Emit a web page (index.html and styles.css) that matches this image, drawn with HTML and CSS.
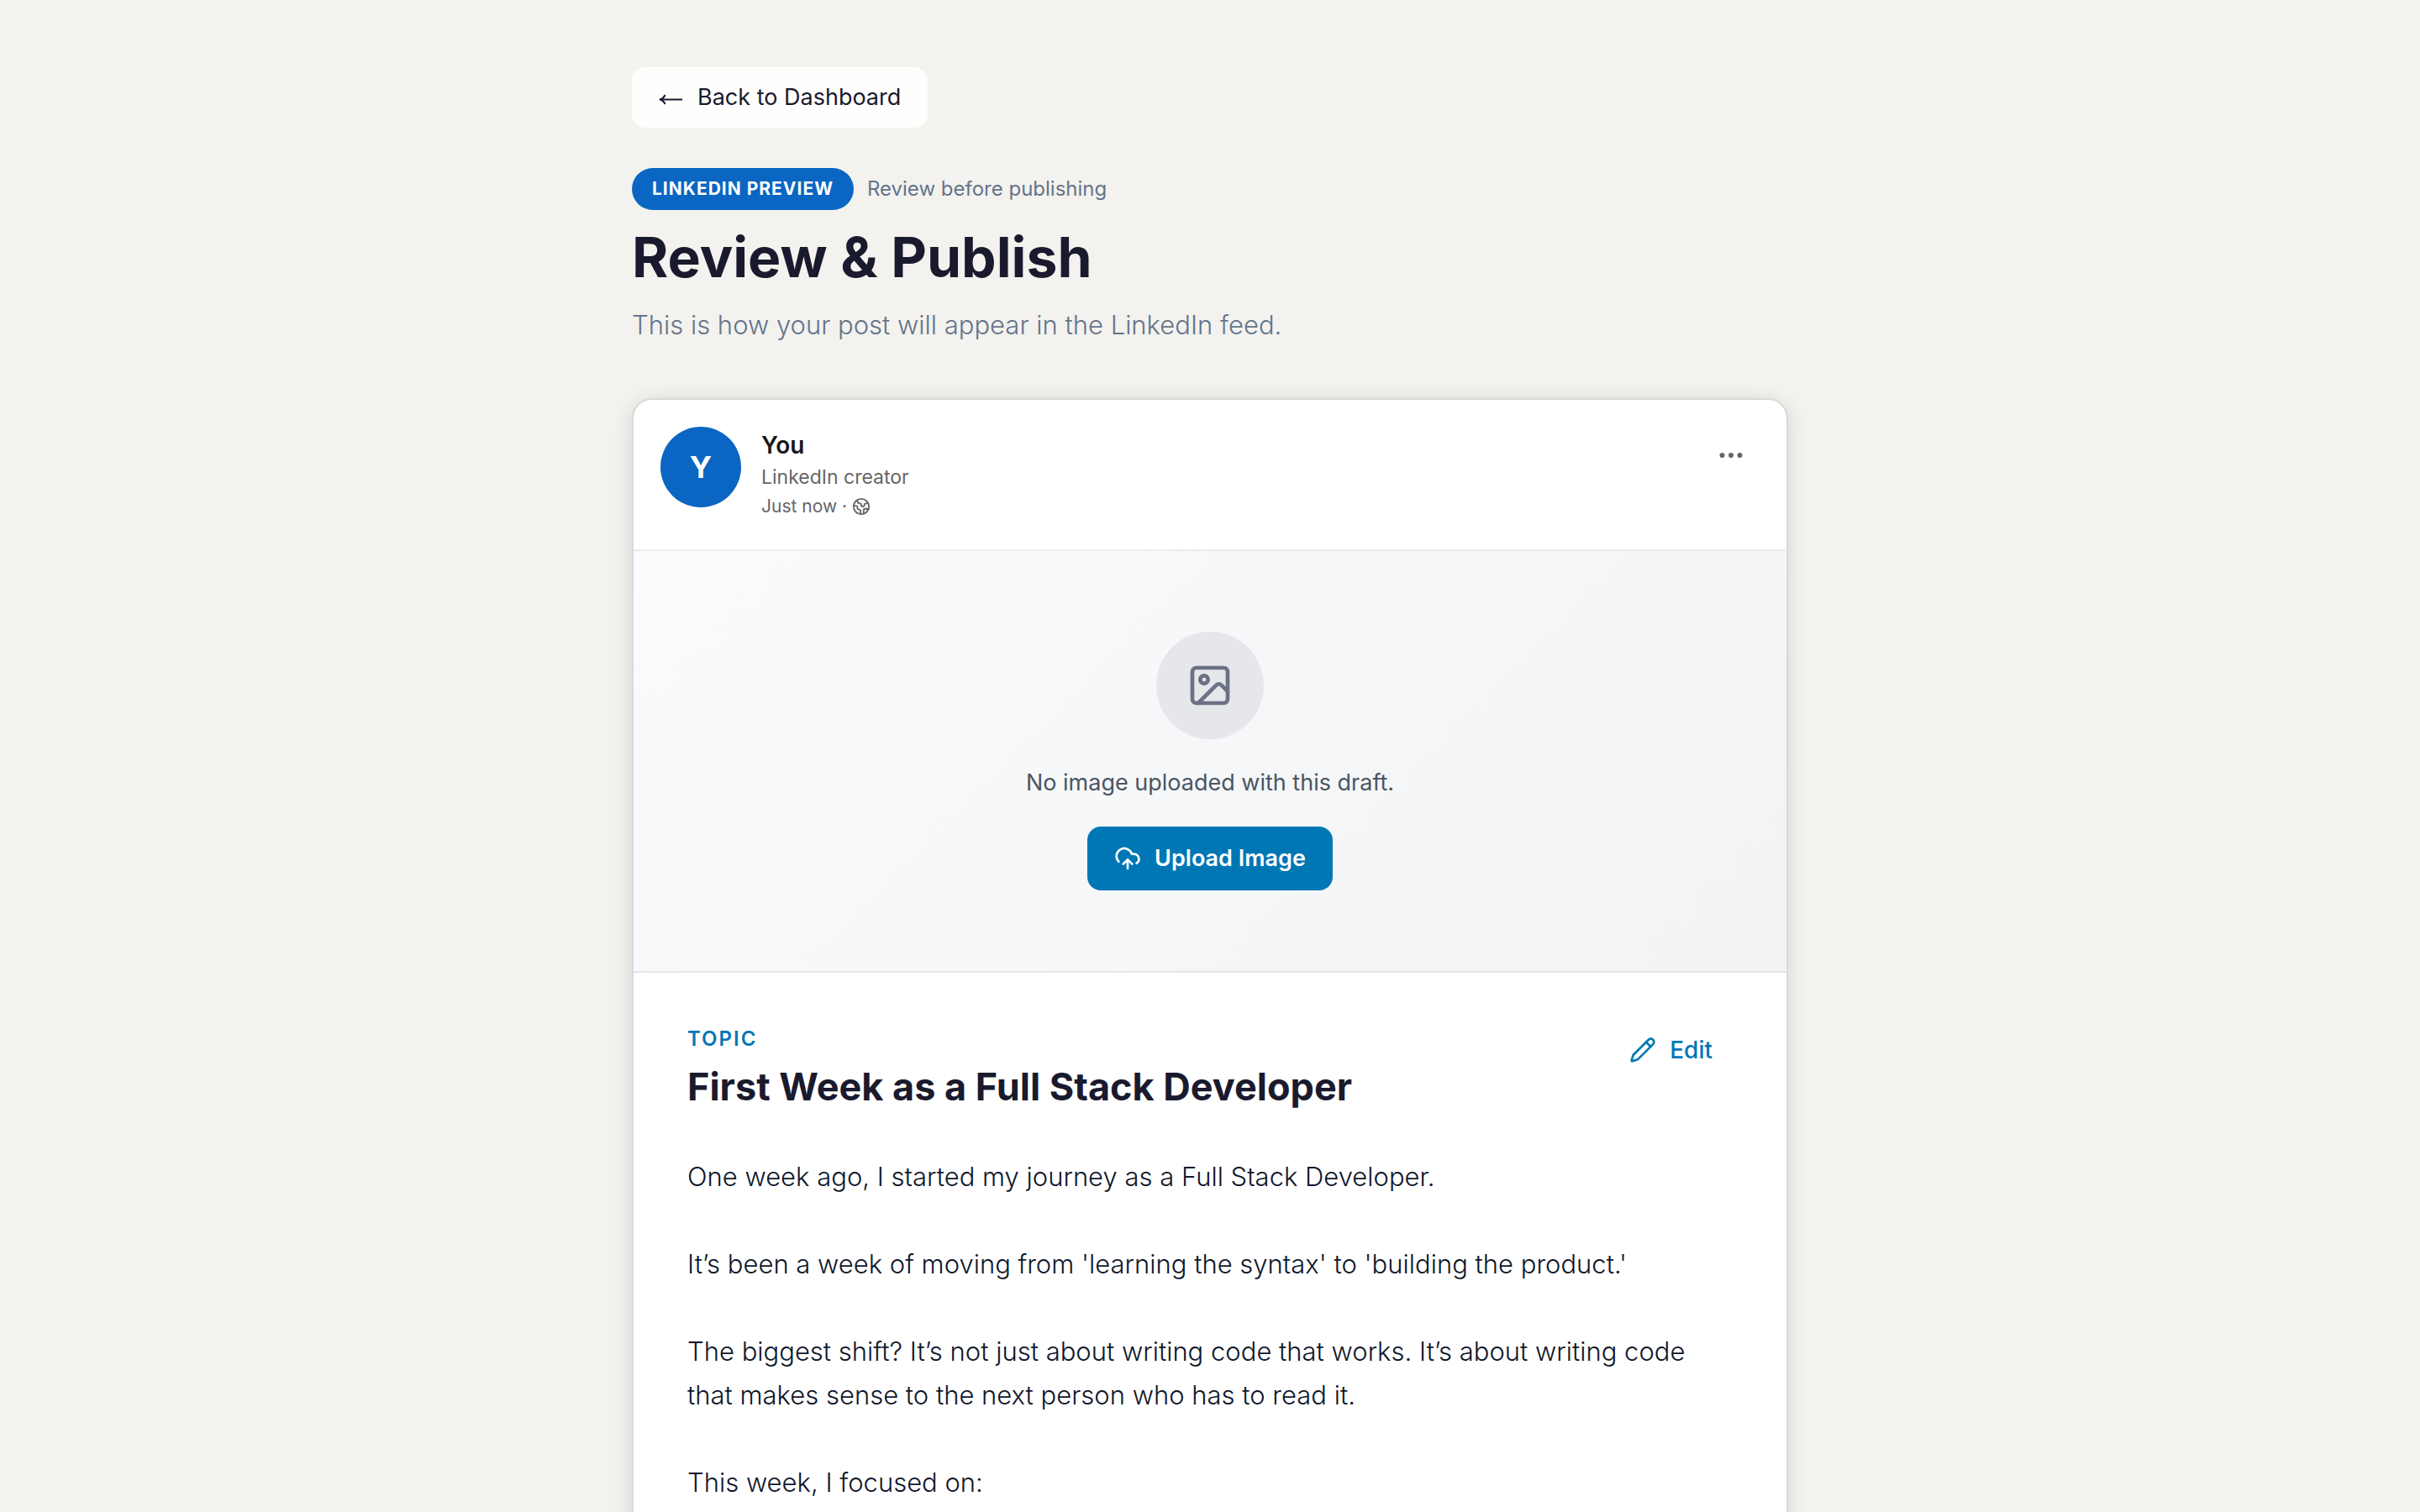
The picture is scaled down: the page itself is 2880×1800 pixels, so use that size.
FILE: index.html
```html
<!DOCTYPE html>
<html lang="en">
<head>
  <meta charset="utf-8">
  <meta name="viewport" content="width=device-width, initial-scale=1">
  <title>Review &amp; Publish</title>
  <link rel="stylesheet" href="styles.css">
</head>
<body>
  <main class="page">
    <button class="back" type="button">
      <svg class="icon icon-back" viewBox="0 0 28 28" aria-hidden="true"><path d="M2 16.500H28"/><path d="M7.500 11C6.300 13.800 4.300 15.800 1.500 16.500C4.300 17.200 6.300 19.200 7.500 22"/></svg>
      Back to Dashboard
    </button>

    <header class="intro">
      <div class="intro-meta">
        <span class="pill">LINKEDIN PREVIEW</span>
        <span class="meta-note">Review before publishing</span>
      </div>
      <h1 class="title">Review &amp; Publish</h1>
      <p class="subtitle">This is how your post will appear in the LinkedIn feed.</p>
    </header>

    <article class="card">
      <div class="author">
        <div class="avatar" aria-hidden="true">Y</div>
        <div class="author-text">
          <div class="author-name">You</div>
          <div class="author-role">LinkedIn creator</div>
          <div class="author-time">
            <span>Just now ·</span>
            <svg class="icon icon-globe" viewBox="0 0 24 24" aria-hidden="true"><path d="M21.54 15H17a2 2 0 0 0-2 2v4.54"/><path d="M7 3.34V5a3 3 0 0 0 3 3a2 2 0 0 1 2 2c0 1.1.9 2 2 2a2 2 0 0 0 2-2c0-1.1.9-2 2-2h3.17"/><path d="M11 21.95V18a2 2 0 0 0-2-2a2 2 0 0 1-2-2v-1a2 2 0 0 0-2-2H2.05"/><circle cx="12" cy="12" r="10"/></svg>
          </div>
        </div>
        <button class="more" type="button" aria-label="More options">
          <svg class="icon icon-more" viewBox="0 0 24 24" aria-hidden="true"><circle cx="12" cy="12" r="1"/><circle cx="19" cy="12" r="1"/><circle cx="5" cy="12" r="1"/></svg>
        </button>
      </div>

      <section class="media">
        <div class="media-badge">
          <svg class="icon icon-image" viewBox="0 0 24 24" aria-hidden="true"><rect x="3" y="3" width="18" height="18" rx="2"/><circle cx="9" cy="9" r="2"/><path d="m21 15-3.086-3.086a2 2 0 0 0-2.828 0L6 21"/></svg>
        </div>
        <p class="media-note">No image uploaded with this draft.</p>
        <button class="upload" type="button">
          <svg class="icon icon-action" viewBox="0 0 24 24" aria-hidden="true"><path d="M12 13v8"/><path d="M4 14.899A7 7 0 1 1 15.71 8h1.79a4.5 4.5 0 0 1 2.5 8.242"/><path d="m8 17 4-4 4 4"/></svg>
          Upload Image
        </button>
      </section>

      <section class="post">
        <div class="post-head">
          <div class="post-heading">
            <div class="topic">TOPIC</div>
            <h2 class="post-title">First Week as a Full Stack Developer</h2>
          </div>
          <button class="edit" type="button">
            <svg class="icon icon-action" viewBox="0 0 24 24" aria-hidden="true"><path d="M21.174 6.812a1 1 0 0 0-3.986-3.987L3.842 16.174a2 2 0 0 0-.5.83l-1.321 4.352a.5.5 0 0 0 .623.622l4.353-1.32a2 2 0 0 0 .83-.497z"/><path d="m15 5 4 4"/></svg>
            Edit
          </button>
        </div>
        <div class="post-body">
          <p>One week ago, I started my journey as a Full Stack Developer.</p>
          <p>It’s been a week of moving from 'learning the syntax' to 'building the product.'</p>
          <p>The biggest shift? It’s not just about writing code that works. It’s about writing code that makes sense to the next person who has to read it.</p>
          <p>This week, I focused on:</p>
        </div>
      </section>
    </article>
  </main>
</body>
</html>
```
FILE: styles.css
```css
* {
  box-sizing: border-box;
}

body {
  margin: 0;
  background: #f3f2ee;
  color: #1a1a2e;
  font-family: Inter, "Liberation Sans", sans-serif;
}

h1, h2, p {
  margin: 0;
}

button {
  border: 0;
  font-family: inherit;
  cursor: pointer;
}

.page {
  max-width: 1440px;
  margin: 0 auto;
  padding: 80px 32px;
}

.icon {
  flex: none;
  fill: none;
  stroke: currentColor;
  stroke-width: 2;
  stroke-linecap: round;
  stroke-linejoin: round;
}

.icon-globe { width: 22px; height: 22px; }
.icon-back { width: 28px; height: 28px; stroke-linecap: butt; }
.icon-action { width: 32px; height: 32px; }
.icon-more { width: 36px; height: 36px; }
.icon-image { width: 56px; height: 56px; }

.back {
  display: flex;
  align-items: center;
  gap: 18px;
  margin-bottom: 48px;
  padding: 16px 32px;
  border-radius: 16px;
  background: #fefefc;
  color: #1a1a2e;
  font-size: 27px;
  font-weight: 400;
  line-height: 40px;
}

.intro {
  display: flex;
  flex-direction: column;
  gap: 16px;
  margin-bottom: 62px;
}

.intro-meta {
  display: flex;
  align-items: center;
  gap: 16px;
}

.pill {
  padding: 8px 24px;
  border-radius: 25px;
  background: #0a66c2;
  color: #fff;
  font-size: 21px;
  font-weight: 700;
  letter-spacing: 1px;
  line-height: 34px;
}

.meta-note {
  color: #64748b;
  font-size: 24px;
  line-height: 34px;
}

.title {
  font-size: 66px;
  font-weight: 700;
  line-height: 80px;
}

.subtitle {
  color: #64748b;
  font-size: 31px;
  font-weight: 300;
  line-height: 50px;
}

.card {
  overflow: hidden;
  border: 2px solid #d9d9da;
  border-radius: 24px;
  background: #fff;
  box-shadow: 0 4px 24px rgba(0, 0, 0, 0.12);
}

.author {
  display: flex;
  align-items: flex-start;
  gap: 24px;
  padding: 32px;
  border-bottom: 2px solid #ebedf0;
}

.avatar {
  display: flex;
  flex: none;
  align-items: center;
  justify-content: center;
  width: 96px;
  height: 96px;
  border-radius: 50%;
  background: #0a66c2;
  color: #fff;
  font-size: 36px;
  font-weight: 700;
}

.author-text {
  flex: 1;
  color: #666;
}

.author-name {
  color: #191919;
  font-size: 28px;
  font-weight: 600;
  line-height: 44px;
}

.author-role {
  font-size: 23px;
  line-height: 32px;
}

.author-time {
  display: flex;
  align-items: center;
  gap: 6px;
  font-size: 21px;
  line-height: 38px;
}

.more {
  display: flex;
  padding: 16px;
  background: none;
  color: #666;
}

.media {
  display: flex;
  flex-direction: column;
  align-items: center;
  gap: 32px;
  padding: 96px 32px;
  border-bottom: 2px solid #e2e5e9;
  background: linear-gradient(135deg, #f9fbfd 0%, #f2f3f5 100%);
}

.media-badge {
  display: flex;
  align-items: center;
  justify-content: center;
  width: 128px;
  height: 128px;
  border-radius: 50%;
  background: #e5e7eb;
  color: #6b7285;
}

.media-note {
  color: #4b5563;
  font-size: 27px;
  line-height: 40px;
}

.upload,
.edit {
  display: flex;
  align-items: center;
  gap: 16px;
  line-height: 40px;
}

.upload {
  padding: 18px 32px;
  border-radius: 16px;
  background: #0077b5;
  color: #fff;
  font-size: 27px;
  font-weight: 600;
}

.edit {
  padding: 8px 24px;
  background: none;
  color: #0077b5;
  font-size: 28px;
  font-weight: 500;
}

.post {
  padding: 64px;
}

.post-head {
  display: flex;
  align-items: flex-start;
  justify-content: space-between;
  gap: 32px;
  margin-bottom: 51px;
}

.post-heading {
  display: flex;
  flex-direction: column;
  gap: 12px;
}

.topic {
  color: #0077b5;
  font-size: 24px;
  font-weight: 600;
  letter-spacing: 2px;
  line-height: 30px;
}

.post-title {
  font-size: 45px;
  font-weight: 700;
  line-height: 60px;
}

.post-body {
  display: flex;
  flex-direction: column;
  gap: 52px;
  color: #0f172a;
  font-size: 31px;
  font-weight: 300;
  line-height: 52px;
}
```
